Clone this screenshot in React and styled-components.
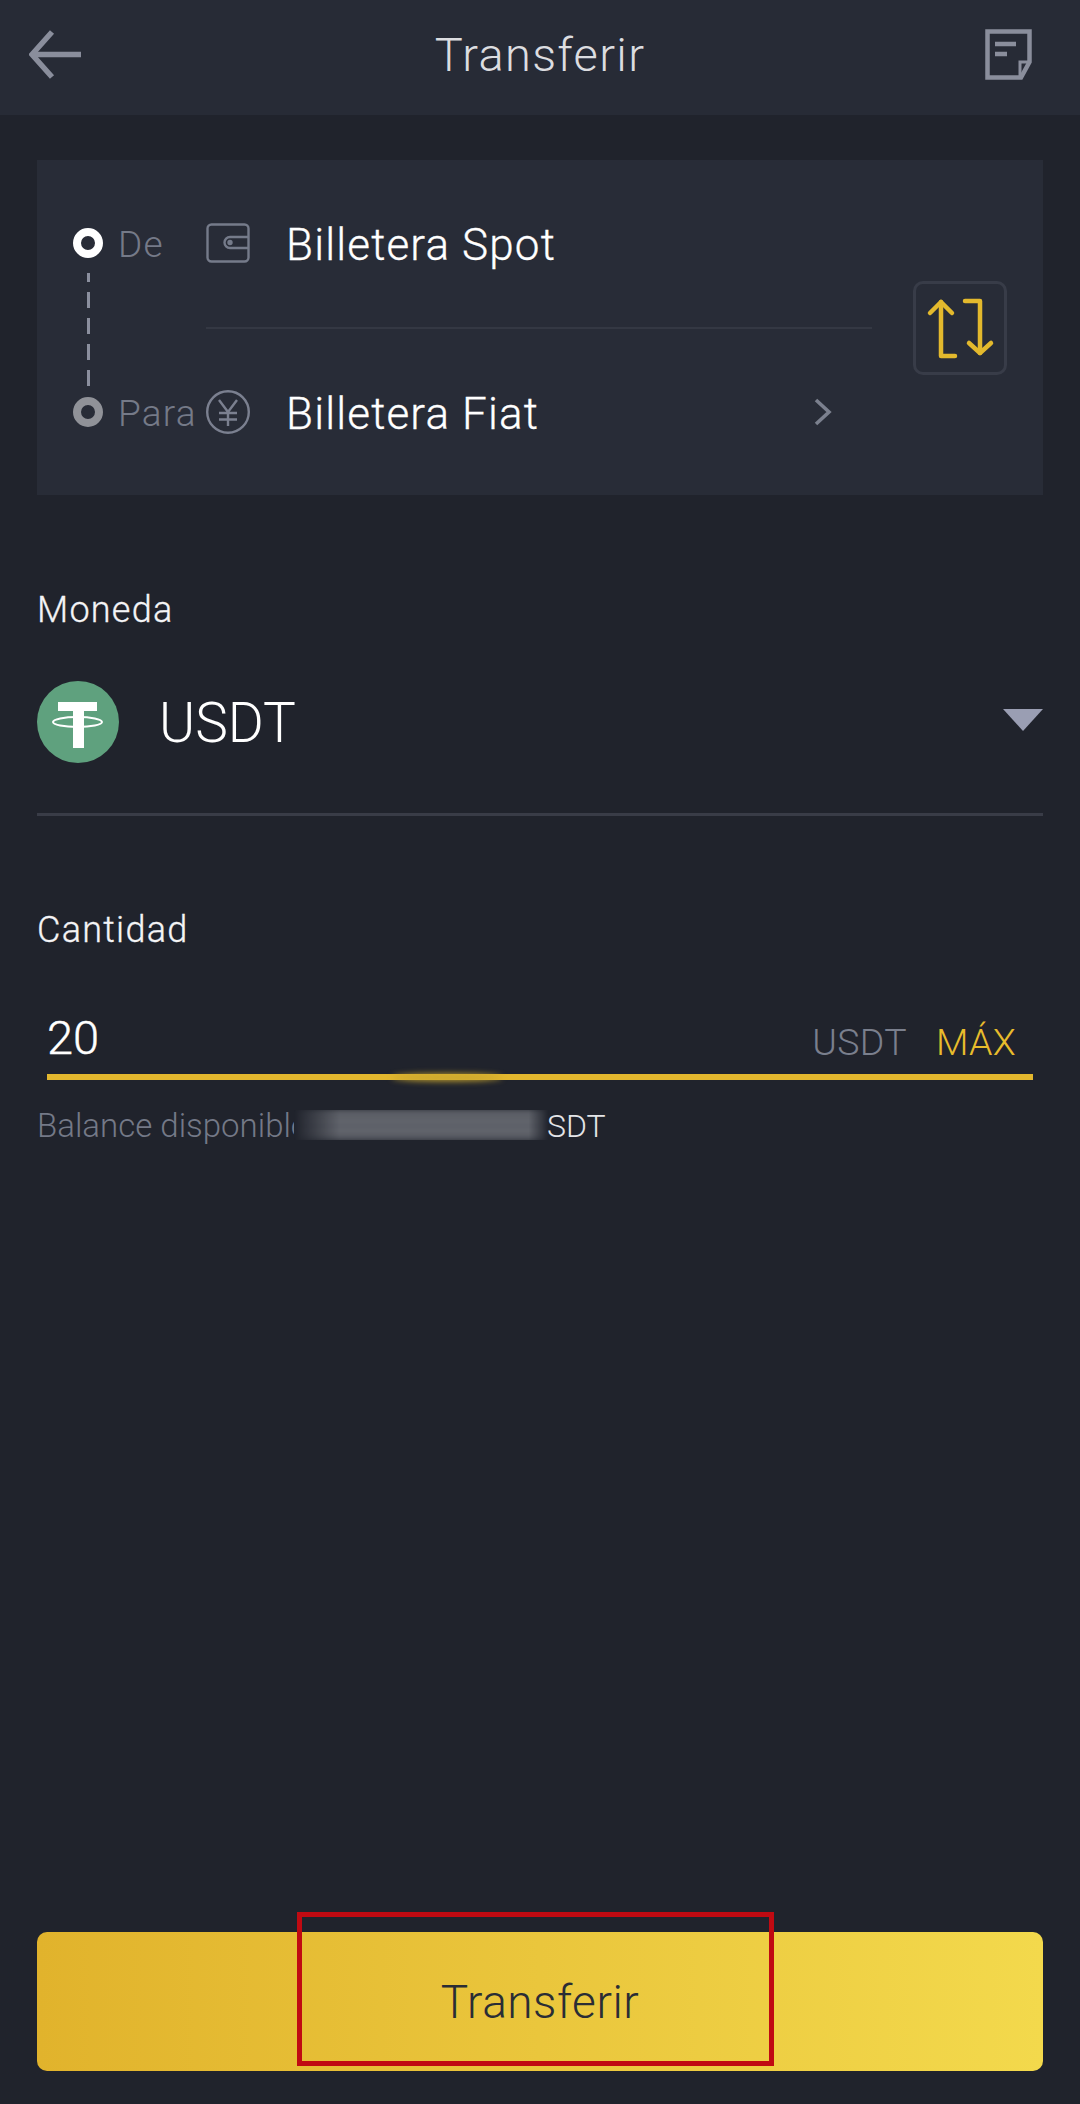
import React from "react";
import styled, { createGlobalStyle } from "styled-components";

const Global = createGlobalStyle`
  html, body { margin: 0; padding: 0; background: #20232c; }
  * { box-sizing: border-box; }
`;

const Page = styled.div`
  width: 1080px;
  height: 2104px;
  display: flex;
  flex-direction: column;
  background: #20232c;
  font-family: Roboto, "Liberation Sans", sans-serif;
  font-weight: 300;
  color: #fff;
  overflow: hidden;
`;

const Header = styled.header`
  height: 115px;
  flex: none;
  display: grid;
  grid-template-columns: 1fr auto 1fr;
  align-items: center;
  padding: 0 29px 6px;
  background: #272b36;
`;

const HeaderEnd = styled.span`
  display: flex;
  justify-self: end;
  margin-right: 19px;
`;

const HeaderStart = styled.span`
  display: flex;
  justify-self: start;
`;

const Title = styled.h1`
  margin: 0;
  font-size: 47px;
  font-weight: 300;
  letter-spacing: 1.3px;
  line-height: 1;
  color: #dcdde0;
`;

const Content = styled.main`
  flex: 1;
  display: flex;
  flex-direction: column;
  padding: 45px 37px 33px;
`;

const Card = styled.section`
  position: relative;
  height: 335px;
  display: flex;
  align-items: center;
  gap: 41px;
  padding: 0 36px;
  background: #282c37;
`;

const Rows = styled.div`
  flex: 1;
  display: flex;
  flex-direction: column;
`;

const Row = styled.div`
  height: 167px;
  display: flex;
  align-items: center;
`;

const Dot = styled.span`
  width: 30px;
  height: 30px;
  flex: none;
  border-radius: 50%;
  border: 8px solid ${(p) => (p.$active ? "#ffffff" : "#909298")};
  background: #282c37;
`;

const Connector = styled.span`
  position: absolute;
  left: 50px;
  top: 113px;
  width: 3px;
  height: 113px;
  background: repeating-linear-gradient(to top, #8b8f9e 0 16px, transparent 16px 26px);
`;

const RowLabel = styled.span`
  width: 88px;
  margin-left: 15px;
  padding-top: 3px;
  flex: none;
  font-size: 37px;
  letter-spacing: 1.2px;
  line-height: 1;
  color: #757a88;
`;

const RowIcon = styled.span`
  width: 44px;
  flex: none;
  display: flex;
`;

const RowValue = styled.span`
  margin-left: 36px;
  padding-top: 3px;
  flex: 1;
  font-size: 44px;
  font-weight: 300;
  letter-spacing: 1.15px;
  line-height: 1;
  color: #fff;
  -webkit-text-stroke: 0.3px #fff;
`;

const Chevron = styled.span`
  display: flex;
  margin-right: 40px;
`;

const Divider = styled.div`
  height: 2px;
  margin-left: 133px;
  background: #343843;
`;

const SwapButton = styled.button`
  width: 94px;
  height: 94px;
  flex: none;
  padding: 0;
  display: flex;
  background: transparent;
  border: 3px solid #383c48;
  border-radius: 10px;
`;

const FieldLabel = styled.div`
  font-size: 36px;
  font-weight: 300;
  letter-spacing: 1.25px;
  line-height: 1;
  color: #f4f4f6;
  -webkit-text-stroke: 0.3px #f4f4f6;
`;

const CoinSection = styled.section`
  margin-top: 97px;
`;

const CoinRow = styled.div`
  margin-top: 53px;
  padding-bottom: 50px;
  display: flex;
  align-items: center;
  border-bottom: 3px solid #393c47;
`;

const CoinName = styled.span`
  margin-left: 40px;
  padding-top: 3px;
  flex: 1;
  font-size: 55px;
  line-height: 1;
`;

const Caret = styled.span`
  width: 0;
  height: 0;
  margin-bottom: 4px;
  border-left: 20.5px solid transparent;
  border-right: 20.5px solid transparent;
  border-top: 22px solid #9a9eb3;
`;

const AmountSection = styled.section`
  margin-top: 96px;
`;

const AmountField = styled.div`
  position: relative;
  margin: 40px 10px 0;
  height: 92px;
  padding: 0 17px 13px 0;
  display: flex;
  align-items: flex-end;
  gap: 29px;
  border-bottom: 6px solid #e3b72e;
`;

const AmountValue = styled.span`
  flex: 1;
  font-size: 47px;
  font-weight: 300;
  line-height: 1;
  -webkit-text-stroke: 0.4px #fff;
`;

const Unit = styled.span`
  font-size: 37.5px;
  letter-spacing: 0.3px;
  line-height: 1;
  color: ${(p) => (p.$accent ? "#e8bc2c" : "#7a7f8d")};
`;

const Smudge = styled.span`
  position: absolute;
  left: 345px;
  bottom: -7px;
  width: 110px;
  height: 7px;
  border-radius: 50%;
  background: #c9a62f;
  filter: blur(3px);
`;

const Balance = styled.div`
  position: relative;
  margin-top: 29px;
  display: flex;
  align-items: center;
  font-size: 33px;
  letter-spacing: 0;
  line-height: 1;
  color: #747987;
`;

const BalanceEnd = styled.span`
  position: absolute;
  left: 510px;
  font-size: 32px;
  letter-spacing: 0;
  color: #e4e5e8;
`;

const Redaction = styled.span`
  position: absolute;
  left: 257px;
  top: 1px;
  width: 255px;
  height: 30px;
  background: #20232c;
  &::after {
    content: "";
    position: absolute;
    inset: 0;
    filter: blur(3px);
    background: repeating-linear-gradient(to bottom, #6d7077 0 5px, #4d5059 5px 9px);
    mask-image: linear-gradient(90deg, transparent 0, #000 18%, #000 92%, transparent 100%);
  }
`;

const Submit = styled.button`
  position: relative;
  margin-top: auto;
  width: 1006px;
  height: 139px;
  padding: 0;
  border: 0;
  border-radius: 10px;
  background: linear-gradient(90deg, #e1b32c 0%, #f3d94c 100%);
  font-family: inherit;
  font-size: 46px;
  font-weight: 300;
  letter-spacing: 0.5px;
  color: #2a2d35;
`;

const Highlight = styled.span`
  position: absolute;
  left: 260px;
  top: -20px;
  width: 477px;
  height: 154px;
  border: 5px solid #c00a12;
`;

const BackIcon = () => (
  <svg width="53" height="49" viewBox="0 0 53 49" fill="none" stroke="#8a8e9c" strokeWidth="5.5">
    <path d="M23 2 3 24.5 23 47" />
    <path d="M3 24.5H52" />
  </svg>
);

const NoteIcon = () => (
  <svg width="47" height="51" viewBox="0 0 47 51" fill="none" stroke="#8a8e9c" strokeWidth="4.5">
    <path d="M2.5 2.5H44.5V33L36 48.5H2.5Z" />
    <path d="M44.5 33H35V48" strokeWidth="3" />
    <path d="M10 15H31M10 25H22" />
  </svg>
);

const WalletIcon = () => (
  <svg width="44" height="40" viewBox="0 0 44 40" fill="none" stroke="#757b8a" strokeWidth="2.4">
    <rect x="1.5" y="1.5" width="41" height="37" rx="4" />
    <path d="M42 14H24a5.5 5.5 0 0 0 0 11H42" />
    <circle cx="24" cy="19.5" r="1.5" fill="#757b8a" />
  </svg>
);

const YenIcon = () => (
  <svg width="44" height="44" viewBox="0 0 44 44" fill="none" stroke="#7b8090" strokeWidth="2.4">
    <circle cx="22" cy="22" r="20.8" />
    <path d="M13 10 22 22 31 10M22 22V36M13 23H31M13 29.5H31" />
  </svg>
);

const ChevronIcon = () => (
  <svg width="18" height="28" viewBox="0 0 18 28" fill="none" stroke="#7b808e" strokeWidth="3.6">
    <path d="M2 2 15 14 2 26" />
  </svg>
);

const SwapIcon = () => (
  <svg width="88" height="88" viewBox="0 0 88 88" fill="none" stroke="#e3b92d" strokeWidth="4.5" strokeLinecap="round" strokeLinejoin="round">
    <path d="M14 29 25 18 36 29" />
    <path d="M25 18V72H39" />
    <path d="M49 17H64V69" />
    <path d="M53 59 64 69 75 59" />
  </svg>
);

const TetherIcon = () => (
  <svg width="82" height="82" viewBox="0 0 82 82">
    <circle cx="41" cy="41" r="41" fill="#5fa17e" />
    <path d="M21 21H60V30H47V67H36V30H21Z" fill="#fff" />
    <ellipse cx="40.5" cy="41" rx="24.5" ry="5" fill="none" stroke="#fff" strokeWidth="2" />
  </svg>
);

export default function App() {
  return (
    <Page>
      <Global />
      <Header>
        <HeaderStart><BackIcon /></HeaderStart>
        <Title>Transferir</Title>
        <HeaderEnd><NoteIcon /></HeaderEnd>
      </Header>
      <Content>
        <Card>
          <Connector />
          <Rows>
            <Row>
              <Dot $active />
              <RowLabel>De</RowLabel>
              <RowIcon><WalletIcon /></RowIcon>
              <RowValue>Billetera Spot</RowValue>
            </Row>
            <Divider />
            <Row>
              <Dot />
              <RowLabel>Para</RowLabel>
              <RowIcon><YenIcon /></RowIcon>
              <RowValue>Billetera Fiat</RowValue>
              <Chevron><ChevronIcon /></Chevron>
            </Row>
          </Rows>
          <SwapButton aria-label="Intercambiar"><SwapIcon /></SwapButton>
        </Card>
        <CoinSection>
          <FieldLabel>Moneda</FieldLabel>
          <CoinRow>
            <TetherIcon />
            <CoinName>USDT</CoinName>
            <Caret />
          </CoinRow>
        </CoinSection>
        <AmountSection>
          <FieldLabel>Cantidad</FieldLabel>
          <AmountField>
            <AmountValue>20</AmountValue>
            <Unit>USDT</Unit>
            <Unit $accent>MÁX</Unit>
            <Smudge />
          </AmountField>
          <Balance>
            Balance disponible
            <Redaction />
            <BalanceEnd>SDT</BalanceEnd>
          </Balance>
        </AmountSection>
        <Submit>
          Transferir
          <Highlight />
        </Submit>
      </Content>
    </Page>
  );
}
